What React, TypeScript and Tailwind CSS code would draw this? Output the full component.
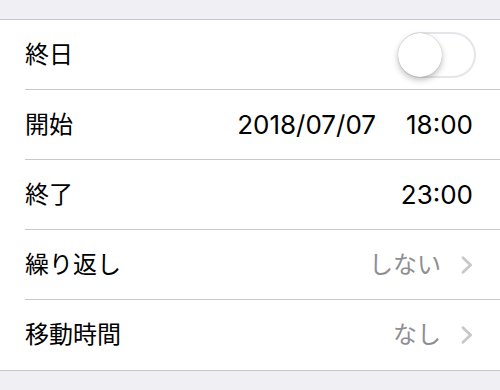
const FONT = "font-['Inter','Noto_Sans_CJK_JP',sans-serif]";

function Chevron() {
  return (
    <svg width="12" height="18" viewBox="0 0 12 18" className="ml-[20px]">
      <path d="M2 1.8 L9.6 9 L2 16.2" fill="none" stroke="#c7c7cc" strokeWidth="2.8" strokeLinecap="round" strokeLinejoin="round" />
    </svg>
  );
}

function Toggle() {
  return (
    <div className="relative w-[78px] h-[46px] rounded-full border-2 border-[#e5e5ea] bg-white mr-[-3px]">
      <div className="absolute left-[-2px] top-[-1px] w-[44px] h-[44px] rounded-full bg-white shadow-[0_3px_6px_rgba(0,0,0,0.25),0_0_1px_rgba(0,0,0,0.3)]" />
    </div>
  );
}

function Row({ label, children, last }: { label: string; children?: React.ReactNode; last?: boolean }) {
  return (
    <div className="pl-[25px] bg-white">
      <div className={"flex items-center justify-between h-[70px] pr-[27px] " + (last ? "" : "border-b border-[#c8c7cc]")}>
        <span className="text-[24px] text-black">{label}</span>
        <div className="flex items-center">{children}</div>
      </div>
    </div>
  );
}

export default function App() {
  return (
    <div className={"w-[500px] h-[390px] bg-[#efeff4] overflow-hidden " + FONT}>
      <div className="h-[19px]" />
      <div className="border-y border-[#c8c7cc] bg-white">
        <Row label="終日">
          <Toggle />
        </Row>
        <Row label="開始">
          <span className="text-[26px] text-black">2018/07/07</span>
          <span className="text-[26px] text-black ml-[30px]">18:00</span>
        </Row>
        <Row label="終了">
          <span className="text-[26px] text-black">23:00</span>
        </Row>
        <Row label="繰り返し">
          <span className="text-[24px] text-[#8e8e93]">しない</span>
          <Chevron />
        </Row>
        <Row label="移動時間" last>
          <span className="text-[24px] text-[#8e8e93]">なし</span>
          <Chevron />
        </Row>
      </div>
    </div>
  );
}
